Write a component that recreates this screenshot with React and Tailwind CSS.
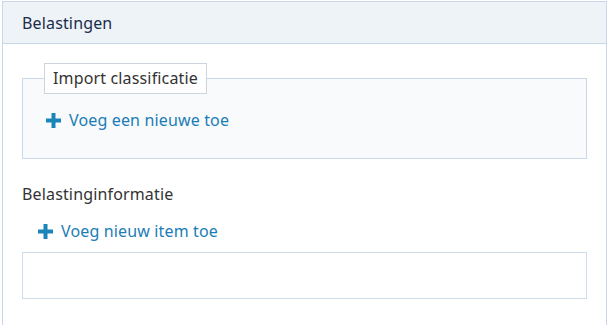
export default function App() {
  return (
    <div className="min-h-screen bg-white pt-px pl-[2px] pr-px tracking-[0.15px]" style={{ fontFamily: '"Noto Sans", "Liberation Sans", sans-serif' }}>
      <div className="border border-b-0 border-[#c8d8ea] min-h-[340px]">
        <div className="h-[42px] bg-[#eef3f8] border-b border-[#c8d8ea] px-[19px] flex items-center text-[16px] leading-[22px] text-[#1b2c4a]">
          Belastingen
        </div>
        <div className="px-[19px] pt-[19px]">
          <fieldset className="border border-[#c8d8ea] bg-[#f8fafc] pl-[23px] pr-4 pt-[15px] pb-[27px]">
            <legend className="-ml-[2px] border border-[#cdd4dc] bg-white px-[8px] py-[5px] text-[16px] leading-[19px] text-[#333]">
              Import classificatie
            </legend>
            <button className="flex items-center gap-2 text-[16px] leading-[22px] text-[#1a7db5]">
              <PlusIcon />
              Voeg een nieuwe toe
            </button>
          </fieldset>
          <div className="mt-[24px] text-[16px] leading-[22px] text-[#333]">Belastinginformatie</div>
          <button className="mt-[15px] ml-4 flex items-center gap-2 text-[16px] leading-[22px] text-[#1a7db5]">
            <PlusIcon />
            Voeg nieuw item toe
          </button>
          <div className="mt-[10px] h-[47px] border border-[#cfdcec] bg-white" />
        </div>
      </div>
    </div>
  );
}

function PlusIcon() {
  return (
    <svg width="15" height="15" viewBox="0 0 15 15" className="shrink-0">
      <path d="M5.5 0h4v5.5H15v4H9.5V15h-4V9.5H0v-4h5.5z" fill="#1a85b8" />
    </svg>
  );
}
